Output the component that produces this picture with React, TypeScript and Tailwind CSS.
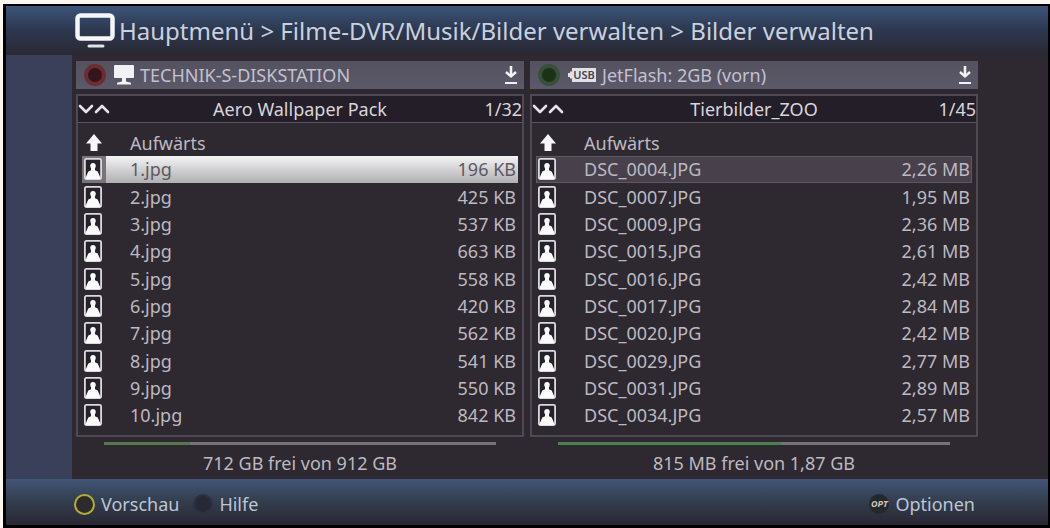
import type { ReactNode } from "react";

type FileEntry = { name: string; size: string };

type Pane = {
  source: string;
  sourceIcon: ReactNode;
  lamp: string;
  folder: string;
  position: string;
  files: FileEntry[];
  activeRow: string;
  activeCell: string;
  activeIcon: string;
  used: number;
  barColor: string;
  space: string;
};

function TvIcon() {
  return (
    <svg className="h-9 w-10 shrink-0" viewBox="0 0 40 36" fill="none" aria-hidden="true">
      <rect x="2.5" y="2.5" width="35" height="23" rx="3" stroke="#f4f6fa" strokeWidth="4.5" />
      <path d="M14 33h14" stroke="#dfe3ea" strokeWidth="3" strokeLinecap="round" />
    </svg>
  );
}

function ComputerIcon() {
  return (
    <svg className="h-5 w-5 shrink-0" viewBox="0 0 20 20" fill="#f2f2f5" aria-hidden="true">
      <rect x="0" y="0" width="20" height="13" rx="1" />
      <path d="M8 13h4v3.5l5 1.3V19.5H3V17.8l5-1.3z" />
    </svg>
  );
}

function UsbIcon() {
  return (
    <svg className="h-4 w-7 shrink-0" viewBox="0 0 28 16" aria-hidden="true">
      <path d="M0 6h2V4.500h2V1h24v14H4v-3.500H2V10H0z" fill="#e2e1e8" />
      <text x="16" y="12" fontSize="11" fontWeight="600" textAnchor="middle" fontFamily="'Noto Sans', sans-serif" fill="#45434f">
        USB
      </text>
    </svg>
  );
}

function DownloadIcon() {
  return (
    <svg className="h-5 w-[14px] shrink-0" viewBox="0 0 14 20" fill="none" stroke="#f2f2f5" aria-hidden="true">
      <path d="M7 1v9" strokeWidth="2.6" />
      <path d="M2 7l5 4.5 5-4.5" strokeWidth="2.4" />
      <path d="M1 18h12" strokeWidth="2" />
    </svg>
  );
}

function SortIcon() {
  return (
    <svg className="h-3 w-8" viewBox="0 0 32 12" fill="none" stroke="#e6e4e8" strokeWidth="2.6" strokeLinecap="round" strokeLinejoin="round" aria-hidden="true">
      <path d="M2 3l6 6 6-6" />
      <path d="M18 9l6-6 6 6" />
    </svg>
  );
}

function UpIcon() {
  return (
    <svg className="h-[18px] w-4" viewBox="0 0 16 18" fill="#f7f7f9" aria-hidden="true">
      <path d="M8 0l8 9.5h-4.500V17h-7V9.500H0z" />
    </svg>
  );
}

function PictureIcon() {
  return (
    <svg className="h-[22px] w-[18px]" viewBox="0 0 18 22" aria-hidden="true">
      <rect x="0.9" y="0.9" width="16.2" height="20.2" rx="1.5" fill="#26222b" stroke="#dcdadf" strokeWidth="1.8" />
      <path d="M9 5c1.700 0 2.800 1.100 2.800 2.800 0 1-.3 1.800-.8 2.400v2l2.700 1.300L16.500 20v1h-15v-1l2.800-6.500L7 12.200v-2c-.5-.6-.8-1.400-.8-2.400C6.200 6.100 7.300 5 9 5z" fill="#fbfbfc" />
    </svg>
  );
}

const panes: Pane[] = [
  {
    source: "TECHNIK-S-DISKSTATION",
    sourceIcon: <ComputerIcon />,
    lamp: "border-[#6b2c34] bg-[#33151a]",
    folder: "Aero Wallpaper Pack",
    position: "1/32",
    files: [
      { name: "1.jpg", size: "196 KB" },
      { name: "2.jpg", size: "425 KB" },
      { name: "3.jpg", size: "537 KB" },
      { name: "4.jpg", size: "663 KB" },
      { name: "5.jpg", size: "558 KB" },
      { name: "6.jpg", size: "420 KB" },
      { name: "7.jpg", size: "562 KB" },
      { name: "8.jpg", size: "541 KB" },
      { name: "9.jpg", size: "550 KB" },
      { name: "10.jpg", size: "842 KB" },
    ],
    activeRow: "text-[#5c5961]",
    activeCell: "bg-linear-to-b from-[#f4f4f5] to-[#b0afb3]",
    activeIcon: "bg-[#77747c]",
    used: 22,
    barColor: "bg-[#55784d]",
    space: "712 GB frei von 912 GB",
  },
  {
    source: "JetFlash: 2GB (vorn)",
    sourceIcon: <UsbIcon />,
    lamp: "border-[#38503a] bg-[#1c3215]",
    folder: "Tierbilder_ZOO",
    position: "1/45",
    files: [
      { name: "DSC_0004.JPG", size: "2,26 MB" },
      { name: "DSC_0007.JPG", size: "1,95 MB" },
      { name: "DSC_0009.JPG", size: "2,36 MB" },
      { name: "DSC_0015.JPG", size: "2,61 MB" },
      { name: "DSC_0016.JPG", size: "2,42 MB" },
      { name: "DSC_0017.JPG", size: "2,84 MB" },
      { name: "DSC_0020.JPG", size: "2,42 MB" },
      { name: "DSC_0029.JPG", size: "2,77 MB" },
      { name: "DSC_0031.JPG", size: "2,89 MB" },
      { name: "DSC_0034.JPG", size: "2,57 MB" },
    ],
    activeRow: "outline -outline-offset-1 outline-[#5f5862]",
    activeCell: "bg-[#48404a]",
    activeIcon: "bg-[#48404a]",
    used: 57,
    barColor: "bg-[#4b7f4b]",
    space: "815 MB frei von 1,87 GB",
  },
];

function FilePane({ pane }: { pane: Pane }) {
  return (
    <section className="flex min-w-0 flex-col" aria-label={pane.source}>
      <button className="flex h-7 items-center bg-linear-to-b from-[#55525f] to-[#5b596a] pr-1.5 pl-2 text-left text-[#c3c1cf]">
        <span className={`mr-2 size-[22px] shrink-0 rounded-full border-4 ${pane.lamp}`} />
        {pane.sourceIcon}
        <span className="ml-1.5 grow whitespace-nowrap">{pane.source}</span>
        <DownloadIcon />
      </button>
      <div className="mt-[5px] border-2 border-[#4e4954] pb-1.5">
        <div className="grid h-[27px] grid-cols-[60px_1fr_60px] items-center border-b border-[#5a5560] bg-[#231e28] text-[#d8d6dc]">
          <button aria-label="Sortierung">
            <SortIcon />
          </button>
          <h2 className="text-center whitespace-nowrap">{pane.folder}</h2>
          <span className="text-right">{pane.position}</span>
        </div>
        <div className="px-1 pt-2">
          <table className="h-[298px] w-full border-collapse text-[#bcb9c1]">
            <tbody>
              <tr>
                <td className="w-6 pl-1">
                  <UpIcon />
                </td>
                <td className="pl-6" colSpan={2}>
                  Aufwärts
                </td>
              </tr>
              {pane.files.map((file, index) => {
                const active = index === 0;
                return (
                  <tr key={file.name} className={active ? pane.activeRow : ""}>
                    <td className={`w-6 pl-0.5 ${active ? pane.activeIcon : ""}`}>
                      <PictureIcon />
                    </td>
                    <td className={`pl-6 ${active ? pane.activeCell : ""}`}>{file.name}</td>
                    <td className={`pr-0.5 text-right ${active ? pane.activeCell : ""}`}>{file.size}</td>
                  </tr>
                );
              })}
            </tbody>
          </table>
        </div>
      </div>
      <div
        className="mx-7 mt-[5px] h-[3px] bg-[#77717a]"
        role="meter"
        aria-label="Belegter Speicher"
        aria-valuenow={pane.used}
      >
        <div className={`h-full ${pane.barColor}`} style={{ width: `${pane.used}%` }} />
      </div>
      <p className="mt-1.5 text-center leading-6 text-[#bcb9c1]">{pane.space}</p>
    </section>
  );
}

export default function App() {
  return (
    <div className="bg-[#fbf7f0] pt-1 pl-[3px] font-['Noto_Sans',sans-serif] text-[18px] leading-5">
      <div className="border-t-2 border-r-2 border-b-3 border-l-3 border-black bg-[#2e2830]">
        <header className="flex h-[49px] items-center bg-linear-to-b from-[#3c5579] via-[#2c374f] to-[#2b2833] pl-[69px] text-[#c9d1df]">
          <TvIcon />
          <h1 className="ml-1 text-2xl leading-9 whitespace-nowrap">
            Hauptmenü &gt; Filme-DVR/Musik/Bilder verwalten &gt; Bilder verwalten
          </h1>
        </header>
        <div className="flex">
          <div className="w-[66px] shrink-0 bg-[#3a4059]" />
          <main className="grid h-[424px] grow grid-cols-2 gap-1.5 pt-1.5 pr-[70px] pl-1">
            {panes.map((pane) => (
              <FilePane key={pane.source} pane={pane} />
            ))}
          </main>
        </div>
        <footer className="flex h-[46px] items-center bg-linear-to-b from-[#425577] via-[#323d4d] to-[#2a2733] pt-1 pr-[73px] pl-[68px] text-[#bcc5d4]">
          <button className="flex items-center gap-1.5">
            <span className="size-[21px] rounded-full border-2 border-[#b5ab35] bg-[#2c2b29]" />
            Vorschau
          </button>
          <button className="ml-3.5 flex items-center gap-1.5">
            <span className="size-5 rounded-full border-2 border-[#2b3147] bg-[#272a36]" />
            Hilfe
          </button>
          <button className="ml-auto flex items-center gap-1.5">
            <span className="flex size-5 items-center justify-center rounded-full bg-[#26272b] text-[9px] font-bold text-[#c6c6bd] italic">
              OPT
            </span>
            Optionen
          </button>
        </footer>
      </div>
    </div>
  );
}
